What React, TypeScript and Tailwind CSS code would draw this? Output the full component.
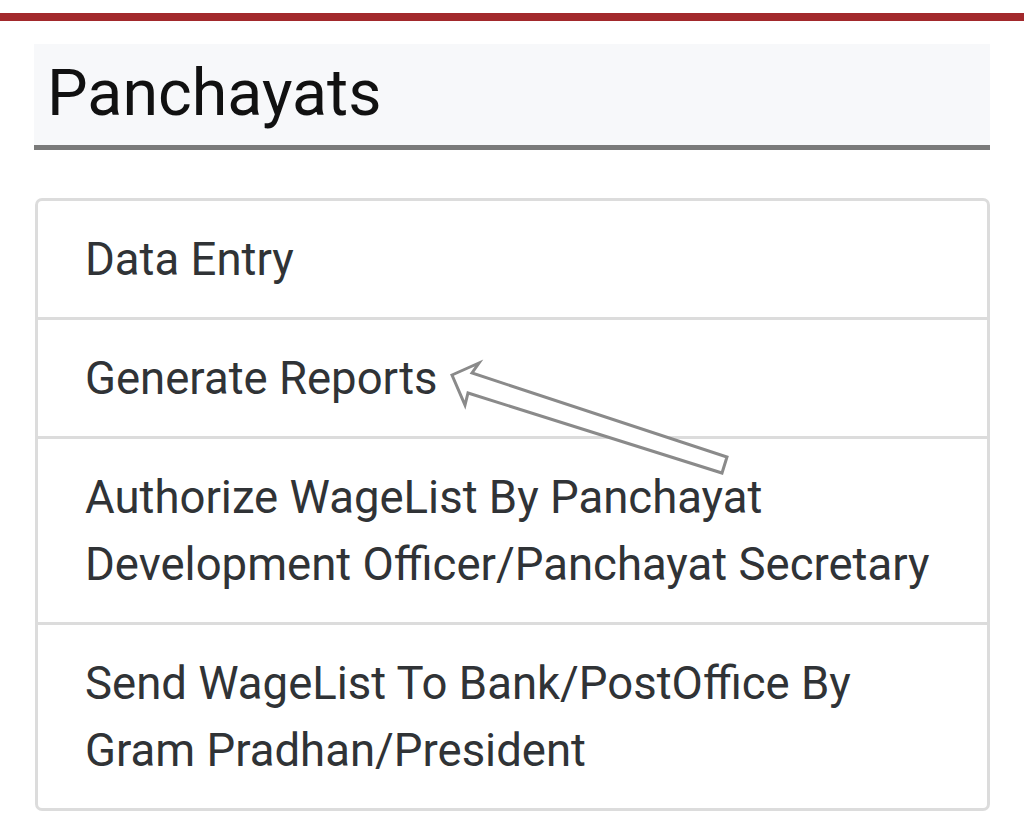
import React from "react";

const items: string[][] = [
  ["Data Entry"],
  ["Generate Reports"],
  ["Authorize WageList By Panchayat", "Development Officer/Panchayat Secretary"],
  ["Send WageList To Bank/PostOffice By", "Gram Pradhan/President"],
];

const App = () => {
  return (
    <div className="relative h-[828px] w-[1024px] overflow-hidden bg-white font-['Roboto',sans-serif]">
      {/* top bar */}
      <div className="pt-[13px]">
        <div className="h-[8px] bg-[#a2292c]" />
      </div>

      <div className="px-[34px] pt-[23px]">
        {/* heading */}
        <div className="h-[106px] border-b-[5px] border-[#7a7a7a] bg-[#f7f8fa] pl-[13px] pt-[1px]">
          <h1 className="text-[64.5px] leading-[96px] text-[#111]">Panchayats</h1>
        </div>

        {/* menu list */}
        <ul className="mt-[48px] ml-[1px] rounded-[7px] border-[3px] border-[#dcdcdc]">
          {items.map((lines, i) => (
            <li
              key={i}
              className={`px-[47px] py-[24.5px] text-[45.5px] leading-[67px] text-[#303336] ${
                i > 0 ? "border-t-[3px] border-[#dcdcdc]" : ""
              }`}
            >
              {lines.map((l, j) => (
                <React.Fragment key={j}>
                  {j > 0 && <br />}
                  {l}
                </React.Fragment>
              ))}
            </li>
          ))}
        </ul>
      </div>

      {/* annotation arrow */}
      <svg className="absolute left-0 top-0" width="1024" height="828" viewBox="0 0 1024 828">
        <polygon
          points="452,375 479,363 472,373 727,457 722,473 468,393 465,405"
          fill="#fff"
          stroke="#8a8a8a"
          strokeWidth="3"
          strokeLinejoin="miter"
        />
      </svg>
    </div>
  );
};

export default App;
